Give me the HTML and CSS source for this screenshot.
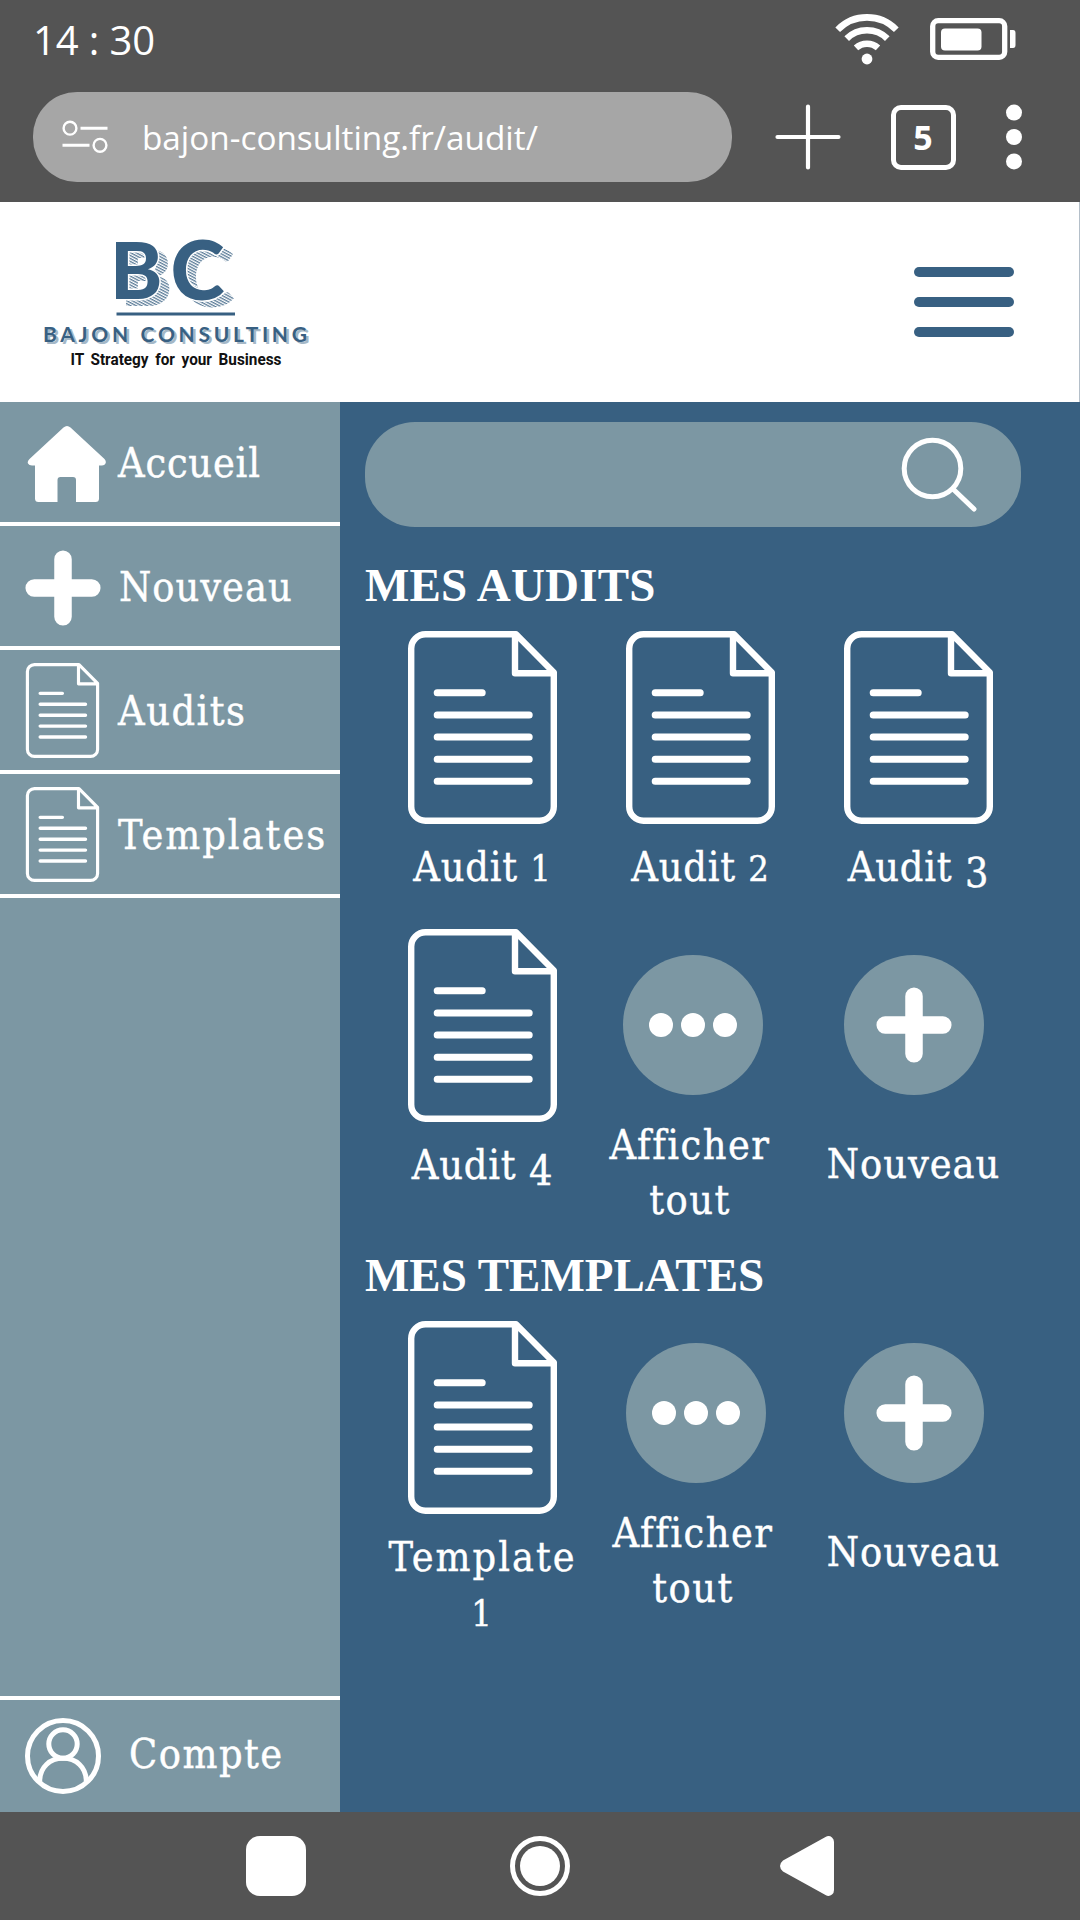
FILE: index.html
```html
<!DOCTYPE html>
<html lang="fr">
<head>
<meta charset="utf-8">
<title>Bajon Consulting – Audit</title>
<link rel="stylesheet" href="styles.css">
</head>
<body>
<svg class="defs" aria-hidden="true">
  <symbol id="doc" viewBox="0 0 149 193">
    <g fill="none" stroke="#fff" stroke-linejoin="round" stroke-linecap="round">
      <path stroke-width="6.4" d="M108 3.2H17.5A14.3 14.3 0 0 0 3.2 17.5V175.500A14.3 14.300 0 0 0 17.500 189.800H131.500A14.300 14.300 0 0 0 145.800 175.500V41.500ZM107 4V42.300H144"/>
      <path stroke-width="7" d="M29.200 61.700H74.200M29.200 83.900H121.200M29.200 106H121.200M29.200 128.200H121.200M29.200 150.300H121.200"/>
    </g>
  </symbol>
  <symbol id="plus" viewBox="0 0 76 76">
    <path d="M38 9.200V66.800M9.200 38H66.800" fill="none" stroke="#fff" stroke-width="17.500" stroke-linecap="round"/>
  </symbol>
</svg>

<div class="phone">
  <div class="system">
    <div class="status">
      <span class="clock">14 : 30</span>
      <svg class="wifi" width="66" height="52" viewBox="0 0 66 52" fill="none" stroke="#fff" stroke-width="6.600">
        <path d="M3.700 16.700A41 41 0 0 1 62.300 16.700M12.700 25.600A29 29 0 0 1 53.300 25.600M22 34.900A16.500 16.500 0 0 1 44 34.900"/>
        <circle cx="33" cy="46" r="5.400" fill="#fff" stroke="none"/>
      </svg>
      <svg class="battery" width="87" height="42" viewBox="0 0 87 42">
        <rect x="2.700" y="2.700" width="72" height="36.600" rx="5.500" fill="none" stroke="#fff" stroke-width="5.300"/>
        <rect x="11" y="10.500" width="40.500" height="22" rx="4" fill="#fff"/>
        <path d="M80 12h3q2.500 0 2.500 3v12q0 3-2.500 3h-3z" fill="#fff"/>
      </svg>
    </div>
    <div class="browser">
      <div class="url">
        <svg width="46" height="34" viewBox="0 0 46 34" fill="none" stroke="#fff">
          <g stroke-width="2.400"><circle cx="8" cy="8.200" r="6.400"/><circle cx="38" cy="25.300" r="6.400"/></g>
          <path stroke-width="3" d="M18.500 8.200H45.500M.500 25.300H27.500"/>
        </svg>
        <span>bajon-consulting.fr/audit/</span>
      </div>
      <svg class="newtab" width="66" height="66" viewBox="0 0 66 66"><path d="M33 2.500V63.500M2.500 33H63.500" stroke="#fff" stroke-width="4.200" stroke-linecap="round"/></svg>
      <div class="tabs">5</div>
      <svg class="kebab" width="16" height="66" viewBox="0 0 16 66" fill="#fff"><circle cx="8" cy="8.600" r="8"/><circle cx="8" cy="33" r="8"/><circle cx="8" cy="57.400" r="8"/></svg>
    </div>
  </div>

  <header class="site">
    <svg class="logo" width="280" height="140" viewBox="36 232 280 140">
      <defs>
        <pattern id="hatch" width="2.600" height="2.600" patternUnits="userSpaceOnUse" patternTransform="rotate(28)">
          <rect width="2.600" height="1.300" fill="#5b7c98"/>
        </pattern>
      </defs>
      <g class="mono">
        <g fill="url(#hatch)"><text x="120" y="306">B</text><text class="c" x="180.500" y="307">C</text></g>
        <g fill="#386082" stroke="#fff" stroke-width="3" paint-order="stroke"><text x="110" y="299">B</text><text class="c" x="170.500" y="300">C</text></g>
      </g>
      <path d="M116.500 314H235" stroke="#386082" stroke-width="3"/>
      <g class="name">
        <text x="45.500" y="343.500" textLength="264" fill="#a5b8c7">BAJON CONSULTING</text>
        <text x="43" y="341.500" textLength="264" fill="#386082">BAJON CONSULTING</text>
      </g>
      <text class="tag" x="70.500" y="364.500" textLength="211" lengthAdjust="spacingAndGlyphs">IT Strategy for your Business</text>
    </svg>
    <div class="burger"><i></i><i></i><i></i></div>
  </header>

  <div class="app">
    <nav class="side">
      <a class="item">
        <svg class="home" width="80" height="78" viewBox="0 0 80 78" fill="#fff"><path d="M36.500 2.500Q40 -.500 43.500 2.500L77.500 34Q79.500 36.500 78.500 38.500Q77.500 40.500 75 40.500H72V73.500Q72 77 68.500 77H49V55Q49 52 46 52H33.500Q30.500 52 30.500 55V77H11.500Q8 77 8 73.500V40.500H5Q2 40.500 1 38.500Q0 36.500 2.500 34Z"/></svg>
        <span class="t-home">Accueil</span>
      </a>
      <a class="item"><svg class="ico-plus"><use href="#plus"/></svg><span class="t-new">Nouveau</span></a>
      <a class="item"><svg class="ico-doc"><use href="#doc"/></svg><span class="t-audits">Audits</span></a>
      <a class="item"><svg class="ico-doc"><use href="#doc"/></svg><span class="t-templates">Templates</span></a>
      <a class="account">
        <svg width="78" height="78" viewBox="0 0 78 78" fill="none" stroke="#fff" stroke-width="5"><circle cx="39" cy="39" r="35.500"/><circle cx="39" cy="27" r="14.200"/><path d="M15.700 64.500C15.700 50 26 41.300 39 41.300S62.300 50 62.300 64.500"/></svg>
        <span class="t-account">Compte</span>
      </a>
    </nav>

    <main class="content">
      <div class="search">
        <svg width="78" height="78" viewBox="0 0 78 78" fill="none" stroke="#fff" stroke-width="5" stroke-linecap="round"><circle cx="31.500" cy="31.500" r="28.300"/><path d="M52 52L73 72"/></svg>
      </div>
      <h2 class="h-audits">MES AUDITS</h2>
      <div class="grid audits">
        <a class="card"><svg class="doc"><use href="#doc"/></svg><span class="t-audit">Audit <b class="low">1</b></span></a>
        <a class="card"><svg class="doc"><use href="#doc"/></svg><span class="t-audit">Audit <b class="low">2</b></span></a>
        <a class="card"><svg class="doc"><use href="#doc"/></svg><span class="t-audit">Audit <b class="drop">3</b></span></a>
        <a class="card"><svg class="doc"><use href="#doc"/></svg><span class="t-audit">Audit <b class="drop">4</b></span></a>
        <a class="card all"><span class="disc"><i></i><i></i><i></i></span><span class="t-all">Afficher<br>tout</span></a>
        <a class="card add"><span class="disc"><svg class="ico-plus"><use href="#plus"/></svg></span><span class="t-new">Nouveau</span></a>
      </div>
      <h2 class="h-templates">MES TEMPLATES</h2>
      <div class="grid templates">
        <a class="card"><svg class="doc"><use href="#doc"/></svg><span class="t-template">Template<br><b class="low">1</b></span></a>
        <a class="card all"><span class="disc"><i></i><i></i><i></i></span><span class="t-all">Afficher<br>tout</span></a>
        <a class="card add"><span class="disc"><svg class="ico-plus"><use href="#plus"/></svg></span><span class="t-new">Nouveau</span></a>
      </div>
    </main>
  </div>

  <div class="keys">
    <svg width="60" height="60"><rect width="60" height="60" rx="14" fill="#fff"/></svg>
    <svg width="60" height="60" fill="#fff"><circle cx="30" cy="30" r="27.500" fill="none" stroke="#fff" stroke-width="5"/><circle cx="30" cy="30" r="20"/></svg>
    <svg width="60" height="60" viewBox="-6 0 60 60" fill="#fff"><path d="M3 24.500L45.500 1Q49 -1 52 1.500Q54 3 54 6V54Q54 57 52 58.500Q49 61 45.500 59L3 35.500Q0 33 0 30T3 24.500Z"/></svg>
  </div>
</div>
</body>
</html>
```
FILE: styles.css
```css
* { box-sizing: border-box; }
body { margin: 0; background: #545454; }
svg { display: block; flex: none; }
.defs { position: absolute; width: 0; height: 0; }
.phone { width: 1080px; height: 1920px; display: flex; flex-direction: column; overflow: hidden; }

/* status and browser bars */
.system { height: 202px; background: #545454; color: #fff; font-family: "Open Sans", sans-serif; }
.status { height: 92px; display: flex; padding-left: 33px; }
.clock { font-size: 40px; line-height: 54px; margin-top: 13px; flex: 1; letter-spacing: -.1px; }
.wifi { margin: 13px 30px 0 0; }
.battery { margin: 18px 63px 0 0; }
.browser { height: 90px; display: flex; align-items: center; padding-left: 33px; }
.url { width: 699px; height: 90px; border-radius: 44px; background: #a6a6a6; display: flex; align-items: center; padding-left: 29px; font-size: 33.300px; line-height: 46px; }
.url span { margin-left: 34px; }
.newtab { margin-left: 43px; }
.tabs { width: 65px; height: 65px; margin-left: 49.500px; border: 5.500px solid #fff; border-radius: 10px; display: flex; align-items: center; justify-content: center; font-size: 34px; font-weight: 700; line-height: 46px; }
.kebab { margin-left: 50px; }

/* site header */
.site { height: 200px; background: #fff; border-right: 1px solid #b4bfc9; display: flex; align-items: center; justify-content: space-between; padding: 0 65px 0 36px; }
.logo { overflow: visible; }
.logo text { white-space: pre; }
.mono { font: 900 79px Lato, sans-serif; }
.mono .c { font-size: 82px; }
.name { font: 700 21px Lato, sans-serif; }
.tag { font: 700 16.500px "Liberation Sans Narrow", Roboto, sans-serif; word-spacing: 3px; fill: #111; }
.burger { width: 100px; display: flex; flex-direction: column; gap: 20px; }
.burger i { height: 10px; border-radius: 5px; background: #386082; }

/* body */
.app { height: 1410px; display: flex; color: #fff; font: 41px/55px "DejaVu Serif Condensed", "DejaVu Serif", serif; font-stretch: condensed; -webkit-text-stroke: .4px #fff; }
.side { width: 340px; background: #7c97a3; display: flex; flex-direction: column; }
.item { height: 124px; border-bottom: 4px solid #fff; display: flex; align-items: center; padding-left: 25px; }
.item span { margin: 3px 0 0 18px; }
.item .t-home { margin-left: 11px; }
.home { margin-top: 4px; margin-left: 2px; }
.ico-plus { width: 76px; height: 76px; }
.item .ico-plus { margin-top: 4px; }
.ico-doc { width: 75px; height: 95px; }
.account { margin-top: auto; height: 116px; border-top: 4px solid #fff; display: flex; align-items: center; padding-left: 24px; }
.account span { margin: -3px 0 0 27px; }

.content { width: 740px; background: #386081; padding: 20px 59px 0 25px; }
.search { height: 105px; border-radius: 50px; background: #7c97a3; display: flex; align-items: center; justify-content: flex-end; padding-right: 42px; }
.search svg { margin-top: 2px; }
h2 { margin: 33px 0 21px; font: 700 47px/50px "Liberation Serif", serif; white-space: nowrap; -webkit-text-stroke: 0; }
.h-audits { letter-spacing: .2px; }
.grid { display: grid; grid-template-columns: repeat(3, 218px); margin-left: 8.500px; }
.audits { grid-template-rows: 298px 321px; }
.audits + h2 { margin-top: 0; }
.card { display: flex; flex-direction: column; align-items: center; text-align: center; }
.doc { width: 149px; height: 193px; margin-bottom: 16px; }
.card b { font-weight: 400; line-height: 0; }
.low { font-size: 36px; }
.drop { vertical-align: -6px; }
.disc { width: 140px; height: 140px; border-radius: 50%; background: #7c97a3; display: flex; align-items: center; justify-content: center; gap: 7.500px; }
.disc i { width: 24.500px; height: 24.500px; border-radius: 50%; background: #fff; }
.all, .add { padding-top: 26px; }
.all { padding-right: 15px; }
.add { padding-right: 10px; }
.all .disc { margin-bottom: 23px; }
.add .disc { margin-bottom: 42px; }
.templates .all, .templates .add { padding-top: 22px; }
.templates .all { padding-right: 9px; }
.t-all { margin-left: -6px; }

/* label tracking */
.t-home, .t-audit { letter-spacing: .8px; }
.t-new { letter-spacing: 1px; }
.t-audits, .t-account, .t-all { letter-spacing: 1.500px; }
.t-templates, .t-template { letter-spacing: 2px; }

/* system keys */
.keys { height: 108px; background: #545454; display: flex; align-items: center; justify-content: space-between; padding: 0 246px; }
```
